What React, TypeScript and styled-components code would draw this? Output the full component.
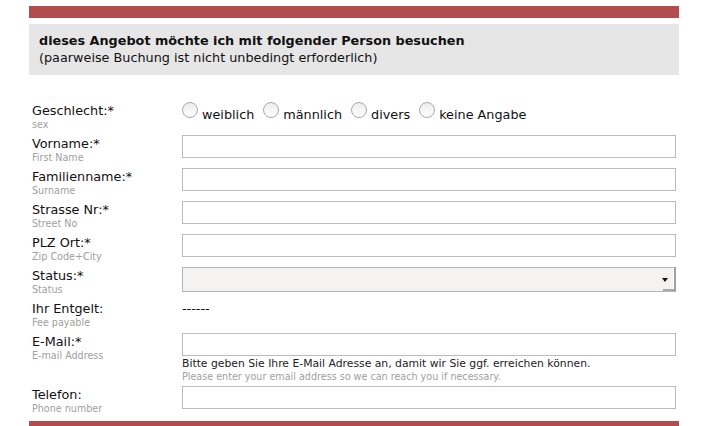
import React from "react";
import styled, { createGlobalStyle } from "styled-components";

const Global = createGlobalStyle`
  html, body { margin: 0; padding: 0; background: #fff; }
  body { font-family: "DejaVu Sans", "Liberation Sans", sans-serif; color: #111; }
`;

const Page = styled.div`
  width: 650px;
  margin-left: 29px;
  padding-top: 6px;
`;

const RedBar = styled.div<{ $h: number }>`
  height: ${(p) => p.$h}px;
  background: #b24c4d;
`;

const InfoBox = styled.div`
  margin-top: 6px;
  background: #e6e6e6;
  padding: 9px 10px 11px;
  font-size: 12.8px;
  line-height: 16px;
  height: 31px;
`;

const Heading = styled.div`
  font-weight: bold;
`;

const SubHeading = styled.div`
  margin-top: 1px;
`;

const Form = styled.div`
  padding: 27px 0 0 3px;
`;

const Row = styled.div<{ $h?: number }>`
  display: grid;
  grid-template-columns: 150px 494px;
  height: ${(p) => p.$h ?? 33}px;
`;

const LabelCol = styled.div`
  display: flex;
  flex-direction: column;
  padding-top: 1px;
`;

const Label = styled.span`
  font-size: 12.8px;
  line-height: 16px;
  color: #111;
`;

const Sub = styled.span`
  font-size: 9.6px;
  line-height: 11px;
  color: #a0a0a0;
`;

const Field = styled.div`
  display: flex;
  flex-direction: column;
`;

const Input = styled.div`
  box-sizing: border-box;
  height: 23px;
  width: 494px;
  border: 1px solid #bbb;
  background: #fff;
`;

const Select = styled.div`
  box-sizing: border-box;
  position: relative;
  height: 25px;
  width: 494px;
  border: 1px solid #b5b5b5;
  border-right: 2px solid #a0a0a0;
  background: #f4f3f2;
  box-shadow: inset -1px 0 0 #ffffff;
`;

const Arrow = styled.span`
  position: absolute;
  right: 6px;
  top: 10px;
  width: 0;
  height: 0;
  border-left: 3px solid transparent;
  border-right: 3px solid transparent;
  border-top: 4px solid #111;
`;

const CornerShade = styled.span`
  position: absolute;
  right: 0;
  bottom: 0;
  width: 11px;
  height: 2px;
  background: #a8a8a8;
`;

const Radios = styled.div`
  display: flex;
  align-items: flex-start;
  font-size: 12.8px;
  line-height: 16px;
`;

const Radio = styled.span`
  box-sizing: border-box;
  width: 16px;
  height: 16px;
  border-radius: 50%;
  border: 1px solid #a9a9a9;
  background: linear-gradient(#ececec, #ffffff);
  margin-right: 4px;
`;

const RadioText = styled.span`
  margin-top: 5px;
  margin-right: 9px;
`;

const Fee = styled.span`
  font-size: 12.8px;
  line-height: 16px;
  padding-top: 1px;
`;

const Help = styled.span`
  font-size: 10.8px;
  line-height: 14px;
  margin-top: 1px;
  color: #222;
`;

const HelpSub = styled.span`
  font-size: 9.6px;
  line-height: 12px;
  color: #a0a0a0;
`;

const BottomBar = styled(RedBar)`
  margin-top: 13px;
`;

const fields: [string, string][] = [
  ["Vorname:*", "First Name"],
  ["Familienname:*", "Surname"],
  ["Strasse Nr:*", "Street No"],
  ["PLZ Ort:*", "Zip Code+City"],
];

export default function App() {
  return (
    <Page>
      <Global />
      <RedBar $h={12} />
      <InfoBox>
        <Heading>dieses Angebot möchte ich mit folgender Person besuchen</Heading>
        <SubHeading>(paarweise Buchung ist nicht unbedingt erforderlich)</SubHeading>
      </InfoBox>
      <Form>
        <Row>
          <LabelCol>
            <Label>Geschlecht:*</Label>
            <Sub>sex</Sub>
          </LabelCol>
          <Radios>
            {["weiblich", "männlich", "divers", "keine Angabe"].map((t) => (
              <React.Fragment key={t}>
                <Radio />
                <RadioText>{t}</RadioText>
              </React.Fragment>
            ))}
          </Radios>
        </Row>
        {fields.map(([l, s]) => (
          <Row key={l}>
            <LabelCol>
              <Label>{l}</Label>
              <Sub>{s}</Sub>
            </LabelCol>
            <Input />
          </Row>
        ))}
        <Row>
          <LabelCol>
            <Label>Status:*</Label>
            <Sub>Status</Sub>
          </LabelCol>
          <Select>
            <Arrow />
            <CornerShade />
          </Select>
        </Row>
        <Row>
          <LabelCol>
            <Label>Ihr Entgelt:</Label>
            <Sub>Fee payable</Sub>
          </LabelCol>
          <Fee>------</Fee>
        </Row>
        <Row $h={53}>
          <LabelCol>
            <Label>E-Mail:*</Label>
            <Sub>E-mail Address</Sub>
          </LabelCol>
          <Field>
            <Input />
            <Help>Bitte geben Sie Ihre E-Mail Adresse an, damit wir Sie ggf. erreichen können.</Help>
            <HelpSub>Please enter your email address so we can reach you if necessary.</HelpSub>
          </Field>
        </Row>
        <Row $h={22}>
          <LabelCol>
            <Label>Telefon:</Label>
            <Sub>Phone number</Sub>
          </LabelCol>
          <Input />
        </Row>
      </Form>
      <BottomBar $h={6} />
    </Page>
  );
}
